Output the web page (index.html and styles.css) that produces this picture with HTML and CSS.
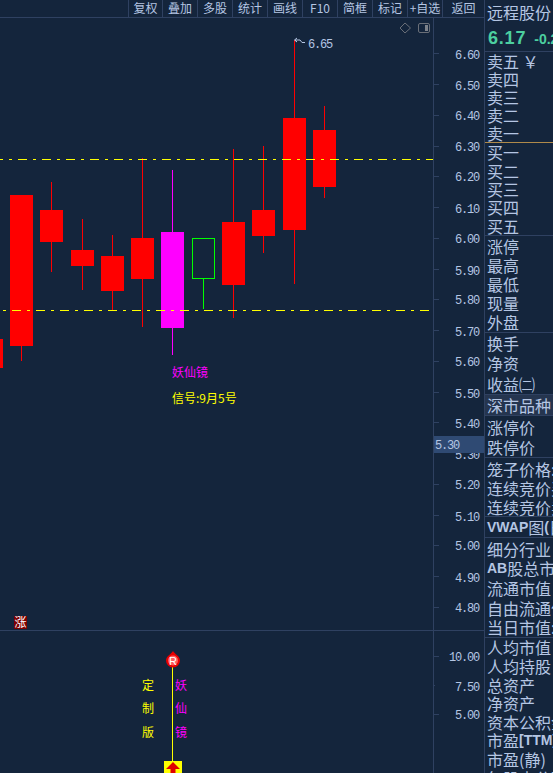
FILE: index.html
```html
<!DOCTYPE html>
<html>
<head>
  <title>远程股份</title>
  <link rel="stylesheet" href="styles.css">
</head>
<body>
<div class="terminal">
  <div class="chart-side">
    <div class="toolbar">
      <div class="tool tool-first">复权</div>
      <div class="tool">叠加</div>
      <div class="tool">多股</div>
      <div class="tool">统计</div>
      <div class="tool">画线</div>
      <div class="tool">F10</div>
      <div class="tool">简框</div>
      <div class="tool">标记</div>
      <div class="tool">+自选</div>
      <div class="tool tool-last">返回</div>
    </div>
    <svg class="chart" width="484" height="755" viewBox="0 18 484 755" shape-rendering="crispEdges">
      <!-- axis and frame -->
      <rect class="frame" x="433" y="18" width="1" height="755"/>
      <rect class="frame" x="0" y="630" width="484" height="1"/>
      <g class="frame">
        <rect x="433" y="53" width="6" height="1"/>
        <rect x="433" y="84" width="6" height="1"/>
        <rect x="433" y="115" width="6" height="1"/>
        <rect x="433" y="146" width="6" height="1"/>
        <rect x="433" y="176" width="6" height="1"/>
        <rect x="433" y="207" width="6" height="1"/>
        <rect x="433" y="238" width="6" height="1"/>
        <rect x="433" y="269" width="6" height="1"/>
        <rect x="433" y="299" width="6" height="1"/>
        <rect x="433" y="330" width="6" height="1"/>
        <rect x="433" y="361" width="6" height="1"/>
        <rect x="433" y="392" width="6" height="1"/>
        <rect x="433" y="422" width="6" height="1"/>
        <rect x="433" y="484" width="6" height="1"/>
        <rect x="433" y="515" width="6" height="1"/>
        <rect x="433" y="545" width="6" height="1"/>
        <rect x="433" y="576" width="6" height="1"/>
        <rect x="433" y="607" width="6" height="1"/>
        <rect x="433" y="656" width="6" height="1"/>
        <rect x="433" y="685" width="2" height="1"/>
        <rect x="433" y="714" width="6" height="1"/>
      </g>
      <g class="axis-text" text-anchor="end">
        <text x="479" y="59">6.60</text>
        <text x="479" y="90">6.50</text>
        <text x="479" y="120">6.40</text>
        <text x="479" y="151">6.30</text>
        <text x="479" y="181">6.20</text>
        <text x="479" y="213">6.10</text>
        <text x="479" y="243">6.00</text>
        <text x="479" y="275">5.90</text>
        <text x="479" y="304">5.80</text>
        <text x="479" y="336">5.70</text>
        <text x="479" y="366">5.60</text>
        <text x="479" y="398">5.50</text>
        <text x="479" y="428">5.40</text>
        <text x="479" y="459">5.30</text>
        <text x="479" y="489">5.20</text>
        <text x="479" y="521">5.10</text>
        <text x="479" y="550">5.00</text>
        <text x="479" y="582">4.90</text>
        <text x="479" y="612">4.80</text>
        <text x="479" y="661">10.00</text>
        <text x="479" y="691">7.50</text>
        <text x="479" y="719">5.00</text>
      </g>
      <rect class="cursor-box" x="434" y="436" width="50" height="17"/>
      <text class="axis-text" x="435" y="449">5.30</text>

      <!-- window icons -->
      <g shape-rendering="auto">
        <path class="icon-line" d="M405 23 L410.500 28 L405 33 L400 28 Z"/>
        <rect class="icon-line" x="418.500" y="23.500" width="11" height="9" rx="1.500"/>
        <rect class="icon-fill" x="425" y="25" width="3" height="6"/>
      </g>

      <!-- candles -->
      <g class="up">
        <rect x="0" y="339" width="3" height="29"/>
        <rect x="21" y="346" width="1" height="15"/>
        <rect x="10" y="195" width="23" height="151"/>
        <rect x="51" y="182" width="1" height="90"/>
        <rect x="40" y="210" width="23" height="32"/>
        <rect x="82" y="219" width="1" height="71"/>
        <rect x="71" y="250" width="23" height="16"/>
        <rect x="112" y="235" width="1" height="76"/>
        <rect x="101" y="256" width="23" height="35"/>
        <rect x="142" y="158" width="1" height="169"/>
        <rect x="131" y="238" width="23" height="41"/>
        <rect x="233" y="149" width="1" height="169"/>
        <rect x="222" y="222" width="23" height="63"/>
        <rect x="263" y="146" width="1" height="107"/>
        <rect x="252" y="210" width="23" height="26"/>
        <rect x="294" y="40" width="1" height="244"/>
        <rect x="283" y="118" width="23" height="112"/>
        <rect x="324" y="106" width="1" height="92"/>
        <rect x="313" y="130" width="23" height="57"/>
      </g>
      <g class="signal">
        <rect x="172" y="170" width="1" height="185"/>
        <rect x="161" y="232" width="23" height="96"/>
      </g>
      <rect class="hollow" x="192.500" y="238.500" width="22" height="40"/>
      <rect class="hollow-wick" x="203" y="279" width="1" height="30"/>

      <!-- price lines -->
      <line class="price-line" x1="0" y1="159.500" x2="433" y2="159.500" stroke-dashoffset="6"/>
      <line class="price-line" x1="3" y1="310.500" x2="433" y2="310.500" stroke-dashoffset="15"/>

      <!-- high marker -->
      <polyline class="flag" shape-rendering="auto" points="297,38 294.500,40 297,42 295,40 300,40 302,42.500 305,42.500"/>
      <text class="axis-text" x="308" y="48">6.65</text>

      <text class="cjk magenta" x="172" y="377">妖仙镜</text>
      <text class="cjk yellow" x="172" y="403">信号:9月5号</text>

      <rect class="badge" x="14" y="616" width="13" height="13"/>
      <text class="cjk badge-text" x="14.500" y="627">涨</text>

      <!-- lower study -->
      <rect class="yellow-fill" x="172" y="667" width="1" height="94"/>
      <g shape-rendering="auto">
        <path class="drop" d="M173 651 C174.500 654 180 656 180 660.500 A7 7 0 0 1 166 660.500 C166 656 171.500 654 173 651 Z"/>
        <circle class="drop-in" cx="173" cy="660.500" r="5"/>
      </g>
      <text class="drop-text" x="173" y="664.500" text-anchor="middle">R</text>
      <text class="cjk yellow" x="142" y="690">定</text>
      <text class="cjk yellow" x="142" y="713">制</text>
      <text class="cjk yellow" x="142" y="737">版</text>
      <text class="cjk magenta" x="175" y="690">妖</text>
      <text class="cjk magenta" x="175" y="713">仙</text>
      <text class="cjk magenta" x="175" y="737">镜</text>
      <rect class="yellow-fill" x="164" y="761" width="18" height="12"/>
      <path class="arrow" shape-rendering="auto" d="M173 762 L180 769 H175.500 V773 H170.500 V769 H166 Z"/>
    </svg>
  </div>

  <div class="panel">
    <div class="stock-name">远程股份</div>
    <div class="quote"><span class="quote-price">6.17</span><span class="quote-change">-0.21</span></div>
    <div class="group group-sell">
      <div class="row">卖五 ￥</div>
      <div class="row">卖四</div>
      <div class="row">卖三</div>
      <div class="row">卖二</div>
      <div class="row">卖一</div>
    </div>
    <div class="group group-buy">
      <div class="row">买一</div>
      <div class="row">买二</div>
      <div class="row">买三</div>
      <div class="row">买四</div>
      <div class="row">买五</div>
    </div>
    <div class="group group-limit">
      <div class="row">涨停</div>
      <div class="row">最高</div>
      <div class="row">最低</div>
      <div class="row">现量</div>
      <div class="row">外盘</div>
    </div>
    <div class="group group-ratio">
      <div class="row">换手</div>
      <div class="row">净资</div>
      <div class="row">收益㈡</div>
    </div>
    <div class="group group-title">
      <div class="row">深市品种</div>
    </div>
    <div class="group group-stop">
      <div class="row">涨停价</div>
      <div class="row">跌停价</div>
    </div>
    <div class="group group-auction">
      <div class="row">笼子价格:</div>
      <div class="row">连续竞价买</div>
      <div class="row">连续竞价卖</div>
    </div>
    <div class="group group-vwap">
      <div class="row"><b>VWAP</b>图<b>(</b>日</div>
    </div>
    <div class="group group-cap">
      <div class="row">细分行业</div>
      <div class="row"><b>AB</b>股总市值</div>
      <div class="row">流通市值</div>
      <div class="row">自由流通值</div>
      <div class="row">当日市值:</div>
    </div>
    <div class="group group-fund">
      <div class="row">人均市值</div>
      <div class="row">人均持股</div>
      <div class="row">总资产</div>
      <div class="row">净资产</div>
      <div class="row">资本公积金</div>
      <div class="row">市盈<b>[TTM]</b></div>
      <div class="row">市盈(静)</div>
      <div class="row">每股未分配</div>
    </div>
  </div>
</div>
</body>
</html>
```

FILE: styles.css
```css
html, body {
  margin: 0;
  height: 100%;
  overflow: hidden;
  background: #14253c;
}

.terminal {
  display: flex;
  width: 553px;
  height: 773px;
  overflow: hidden;
  font-family: "Noto Sans CJK SC", "Liberation Sans", sans-serif;
  color: #b5c6e3;
}

.chart-side {
  width: 484px;
  flex: none;
}

/* top buttons */
.toolbar {
  display: flex;
  justify-content: flex-end;
  height: 17px;
  border-bottom: 1px solid #2f4161;
}
.tool {
  width: 34px;
  border-left: 1px solid #2f4161;
  font-size: 12px;
  line-height: 15px;
  text-align: center;
  white-space: nowrap;
}
.tool-first {
  width: 33px;
}
.tool-last {
  width: 41px;
}

.chart {
  display: block;
}
.frame {
  fill: #2f4161;
}
.axis-text {
  font-family: "Liberation Mono", monospace;
  font-size: 12px;
  letter-spacing: -1.2px;
  fill: #b5c6e3;
}
.cursor-box {
  fill: #2f4a73;
}
.icon-line {
  fill: none;
  stroke: #6a6f78;
}
.icon-fill {
  fill: #7d828a;
}
.up {
  fill: #ff0000;
}
.signal {
  fill: #ff00ff;
}
.hollow {
  fill: none;
  stroke: #00ff00;
}
.hollow-wick {
  fill: #00ff00;
}
.price-line {
  stroke: #ffff00;
  stroke-dasharray: 9 6 3 6;
}
.flag {
  fill: none;
  stroke: #b5c6e3;
}
.cjk {
  font-family: "Noto Sans CJK SC", sans-serif;
  font-size: 12px;
}
.magenta {
  fill: #ff00ff;
}
.yellow {
  fill: #ffff00;
}
.yellow-fill {
  fill: #ffff00;
}
.badge {
  fill: #7d0000;
}
.badge-text {
  fill: #ffffff;
}
.drop {
  fill: #e80000;
}
.drop-in {
  fill: #ff5c5c;
}
.drop-text {
  font-family: "Liberation Sans", sans-serif;
  font-size: 11px;
  fill: #ffffff;
}
.arrow {
  fill: #e00000;
}

/* right quote panel */
.panel {
  flex: 1;
  min-width: 0;
  border-left: 1px solid #2f4161;
  white-space: nowrap;
  overflow: hidden;
  font-size: 16px;
}
.stock-name {
  height: 25px;
  padding-left: 2px;
  line-height: 25px;
}
.quote {
  display: flex;
  align-items: baseline;
  gap: 8px;
  height: 26px;
  padding-left: 3px;
  border-bottom: 1px solid #2f4161;
  line-height: 26px;
  color: #4ccfa0;
  font-family: "Liberation Sans", sans-serif;
  font-weight: bold;
}
.quote-price {
  font-size: 18px;
  letter-spacing: 0.8px;
}
.quote-change {
  font-size: 14px;
}

/* each group stacks equal rows in a fixed height */
.group {
  display: grid;
  grid-auto-rows: 1fr;
  box-sizing: border-box;
  border-bottom: 1px solid #2f4161;
}
.group-sell {
  height: 91px;
  border-bottom-color: #b08a4a;
}
.group-buy {
  height: 93px;
}
.group-limit {
  height: 97px;
}
.group-ratio {
  height: 62px;
}
.group-title {
  height: 21px;
  background: #25354f;
}
.group-stop {
  height: 42px;
  padding-top: 1px;
}
.group-auction {
  height: 59px;
  padding-top: 2px;
}
.group-vwap {
  height: 21px;
}
.group-cap {
  height: 100px;
  padding-top: 1px;
}
.group-fund {
  height: 150px;
}
.row {
  display: flex;
  align-items: center;
  padding-left: 2px;
  line-height: 16px;
}
.row b {
  font-family: "Liberation Sans", sans-serif;
  font-size: 14px;
}
```
